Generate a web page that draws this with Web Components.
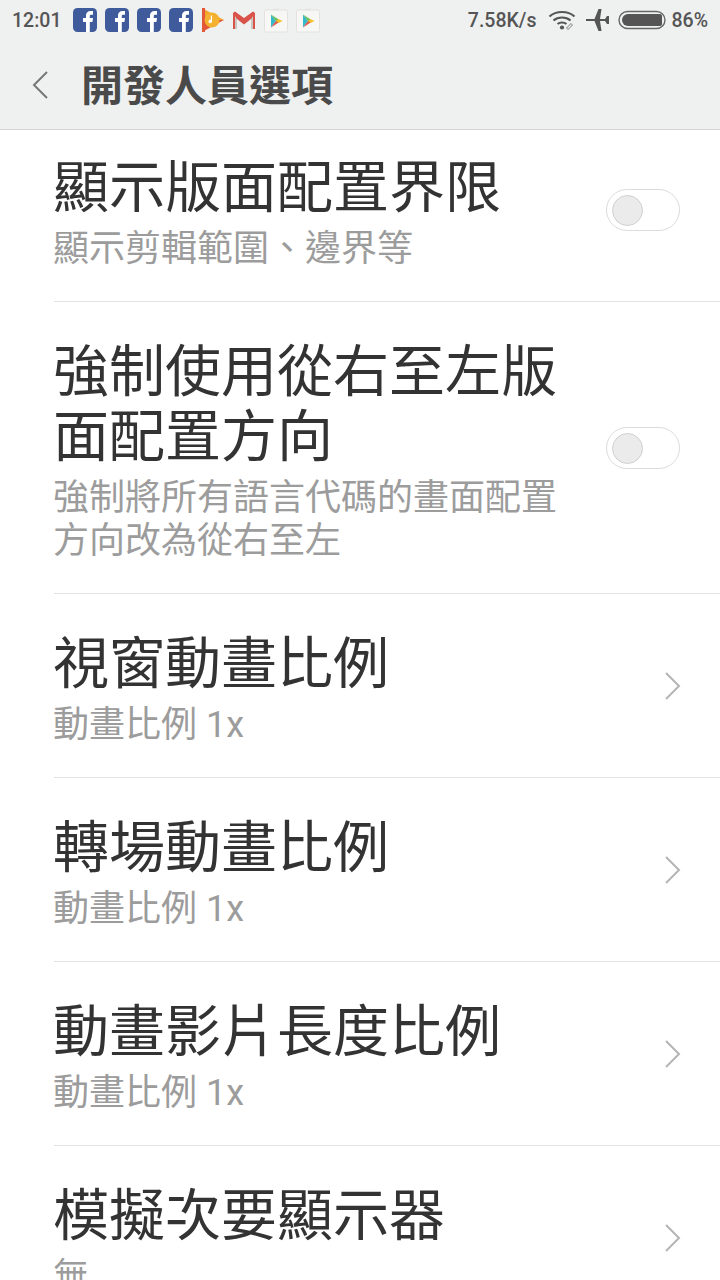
<!DOCTYPE html>
<html lang="zh-Hant"><head><meta charset="utf-8">
<style>
html,body{margin:0;padding:0;background:#fff}
body{width:720px;height:1280px;overflow:hidden;font-family:"Noto Sans CJK TC","Noto Sans",sans-serif}
</style></head><body>
<app-screen>
<status-bar></status-bar>
<title-bar>開發人員選項</title-bar>
<settings-list>
<setting-row type="switch" title="顯示版面配置界限" sub="顯示剪輯範圍、邊界等"></setting-row>
<setting-row type="switch" title="強制使用從右至左版面配置方向" sub="強制將所有語言代碼的畫面配置方向改為從右至左"></setting-row>
<setting-row type="arrow" title="視窗動畫比例" sub="動畫比例 1x"></setting-row>
<setting-row type="arrow" title="轉場動畫比例" sub="動畫比例 1x"></setting-row>
<setting-row type="arrow" title="動畫影片長度比例" sub="動畫比例 1x"></setting-row>
<setting-row type="arrow" title="模擬次要顯示器" sub="無"></setting-row>
</settings-list>
</app-screen>
<script>
const def=(name,html,setup)=>customElements.define(name,class extends HTMLElement{
  constructor(){super();this.attachShadow({mode:'open'}).innerHTML=html;}
  connectedCallback(){setup&&setup(this,this.shadowRoot);}
});
def('app-screen',`<style>:host{display:flex;flex-direction:column;width:720px;height:1280px;overflow:hidden;background:#fff}::slotted(*){flex:none}</style><slot></slot>`);
const fb=`<svg width="24" height="24" viewBox="0 0 24 24"><rect width="24" height="24" rx="4.500" fill="#3f5b9b"/><path d="M13 24V14h-3v-4h3V7.500C13 4.500 15 3 17.500 3H20v3.800h-1.800c-1 0-1.400.5-1.400 1.400V10H20l-.6 4h-2.600v10z" fill="#fff"/></svg>`;
const gplay=`<svg width="24" height="26" viewBox="0 0 24 26"><rect x=".5" y="3" width="23" height="22" rx="1.500" fill="#f7f7f5" stroke="#e2e2e0"/><rect x="9" y="1.500" width="6" height="2" fill="#e6e6e4"/><path d="M7 7.500 12 14 7 20.500z" fill="#35b8c9"/><path d="M7 7.500 17 14h-5z" fill="#6cbf58"/><path d="M7 20.500 17 14h-5z" fill="#e2574c"/><path d="M14.500 12 18.500 14 14.500 16 12 14z" fill="#f9c02e"/></svg>`;
def('status-bar',`<style>
:host{display:flex;align-items:center;height:40px;background:#eff0f0;color:#555;font:500 19.500px Roboto,sans-serif;padding:0 12px 0 12px;box-sizing:border-box}
.icons{display:flex;align-items:center;gap:8px;margin-left:12px}
.sp{flex:1}svg{display:block;flex:none}
.r{display:flex;align-items:center}
</style>
<span>12:01</span>
<div class="icons">${fb}${fb}${fb}${fb}
<svg width="23" height="26" viewBox="0 0 23 26"><path d="M1 1 23 13H1z" fill="#f0a62c"/><path d="M1 25 23 13H1z" fill="#e4583a"/><path d="M1 1h3v24H1z" fill="#e4583a"/><circle cx="11" cy="13" r="7.500" fill="#f4b02f"/><path d="M11 8.500v6a1.800 1.800 0 1 1-1.200-1.700V8.500z" fill="#fff"/></svg>
<svg width="24" height="20" viewBox="0 0 24 20"><path d="M1 3v16h4V9l7 5.500L19 9v10h4V3l-2-1.500L12 8 3 1.500z" fill="#d9534a"/><path d="M5 9V19H3V6zM19 9v10h2V6z" fill="#c9c7c2"/></svg>
${gplay}${gplay}</div>
<span class="sp"></span>
<div class="r"><span>7.58K/s</span>
<svg style="margin-left:12px" width="28" height="22" viewBox="0 0 28 22" fill="none" stroke="#555" stroke-width="2.200"><path d="M1.500 7.500C8 1.500 20 1.500 26.500 7.500"/><path d="M5.500 11.500C10 7.500 18 7.500 22.500 11.500"/><path d="M9.500 15C12 13 16 13 18.500 15"/><circle cx="14" cy="18.500" r="2.100" fill="#555" stroke="none"/><path d="M19 20l5-5" stroke="#888" stroke-width="3"/><path d="M19.500 19.500l4-4" stroke="#eff0f0" stroke-width="1.200"/></svg>
<svg style="margin-left:10px" width="23" height="22" viewBox="0 0 23 22"><path d="M0 10h8.500L12.500 0h3L14 10h5l2-3h2v8h-2l-2-3h-5l1.500 10h-3L8.500 12H0z" fill="#555"/></svg>
<svg style="margin-left:9px" width="48" height="20" viewBox="0 0 48 20"><rect x="1" y="1.500" width="46" height="17" rx="8.500" fill="none" stroke="#666" stroke-width="1.400"/><path d="M10 4H42a2 2 0 0 1 2 2v8a2 2 0 0 1-2 2H10a6 6 0 0 1 0-12z" fill="#555"/></svg>
<span style="margin-left:5px">86%</span></div>`);
def('title-bar',`<style>
:host{display:flex;align-items:center;height:89px;background:#eff0f0;border-bottom:1px solid #d4d5d5;position:relative;z-index:1}
svg{margin-left:32px;flex:none}
span{margin-left:33px;font:700 42px/1 "Noto Sans CJK TC",sans-serif;color:#4a4a4a;position:relative;top:-2px}
</style><svg width="16" height="28" viewBox="0 0 16 28" fill="none" stroke="#777" stroke-width="2"><path d="M15 1 2 14l13 13"/></svg><span><slot></slot></span>`);
def('settings-list',`<style>:host{display:block;margin-top:-12px}</style><slot></slot>`);
def('setting-row',`<style>
:host{display:flex;align-items:center;padding:0 40px 1px 53px;box-sizing:border-box;position:relative}
.t{flex:none;width:505px;padding:32px 0 30px}
.title{font:400 56px/65px "Noto Sans CJK TC",sans-serif;color:#333}
.sub{font:400 36px/43px Roboto,"Noto Sans CJK TC",sans-serif;color:#9c9c9c;margin-top:13px}
.a{margin-left:auto;display:flex}
.line{position:absolute;left:54px;right:0;bottom:0;height:1px;background:#e3e3e3}
</style><div class="t"><div class="title" id="t"></div><div class="sub" id="s"></div></div><div class="a" id="a"></div><div class="line"></div>`,
(h,r)=>{
  r.getElementById('t').textContent=h.getAttribute('title');
  r.getElementById('s').textContent=h.getAttribute('sub');
  r.getElementById('a').innerHTML=h.getAttribute('type')==='switch'
   ?'<toggle-switch></toggle-switch>'
   :'<svg style="margin-right:-1px" width="16" height="28" viewBox="0 0 16 28" fill="none" stroke="#b5b5b5" stroke-width="2"><path d="M1 1l13 13L1 27"/></svg>';
});
def('toggle-switch',`<style>
:host{display:block;width:74px;height:42px;box-sizing:border-box;border:1.500px solid #dcdcdc;border-radius:21px;background:#fff;padding:5px}
i{display:block;width:29px;height:29px;border-radius:50%;background:#ebebeb;border:1px solid #d0d0d0}
</style><i></i>`);
</script></body></html>
